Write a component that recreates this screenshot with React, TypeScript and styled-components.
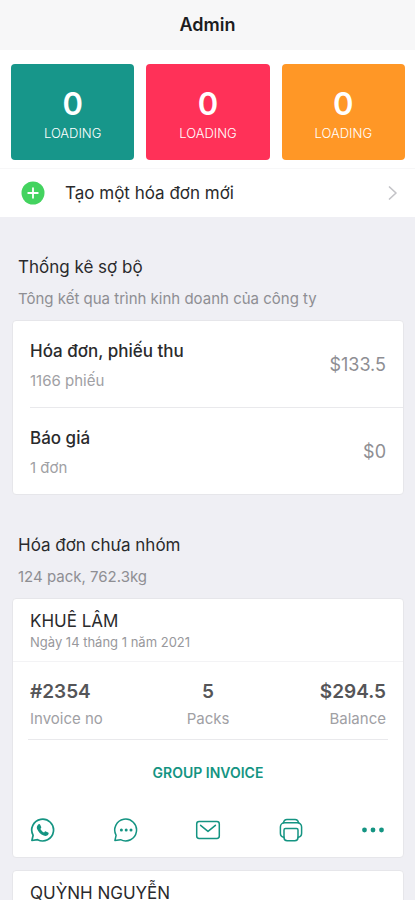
import React from "react";
import styled, { createGlobalStyle } from "styled-components";

const GlobalStyle = createGlobalStyle`
  * { box-sizing: border-box; }
  body {
    margin: 0;
    background: #efeff4;
    font-family: Inter, "Liberation Sans", sans-serif;
    color: #2a2a2c;
  }
  h1, h2, h3, p, ul, dl, dd, dt { margin: 0; padding: 0; font-weight: 400; }
  button { font: inherit; border: 0; background: none; padding: 0; cursor: pointer; }
`;

const Screen = styled.div`
  display: flex;
  flex-direction: column;
  height: 100vh;
`;

const NavBar = styled.header`
  flex: none;
  display: flex;
  align-items: center;
  justify-content: center;
  height: 50px;
  background: #f7f7f8;
`;

const NavTitle = styled.h1`
  font-size: 18px;
  line-height: 24px;
  font-weight: 600;
  color: #1c1c1e;
`;

const Content = styled.main`
  flex: 1;
  min-height: 0;
  overflow-y: auto;
  scrollbar-width: none;
`;

const Tiles = styled.section`
  display: grid;
  grid-template-columns: repeat(3, 1fr);
  gap: 12px;
  padding: 14px 10px 8px 11px;
  background: #fff;
  border-bottom: 1px solid #f7f7f8;
`;

const Tile = styled.div<{ $color: string }>`
  display: flex;
  flex-direction: column;
  align-items: center;
  padding: 22px 0 16px;
  border-radius: 4px;
  background: ${(p) => p.$color};
  color: #fff;
`;

const TileValue = styled.span`
  font-size: 31px;
  line-height: 36px;
  font-weight: 600;
`;

const TileLabel = styled.span`
  font-size: 13px;
  line-height: 22px;
  font-weight: 300;
`;

const CreateRow = styled.button`
  display: flex;
  align-items: center;
  width: 100%;
  height: 48px;
  padding: 0 16px 0 21px;
  background: #fff;
  text-align: left;
`;

const CreateLabel = styled.span`
  flex: 1;
  margin-left: 20px;
  font-size: 17px;
  line-height: 24px;
  color: #2a2a2c;
`;

const Section = styled.section`
  padding: 38px 11px 0 12px;
`;

const SectionTitle = styled.h2`
  padding-left: 6px;
  font-size: 17px;
  line-height: 24px;
`;

const SectionNote = styled.p`
  padding-left: 6px;
  margin: 10px 0 11px;
  font-size: 15px;
  line-height: 20px;
  color: #8e8e93;
`;

const Card = styled.article`
  border: 1px solid #e6e6ea;
  border-radius: 4px;
  background: #fff;
  & + & { margin-top: 12px; }
`;

const StatList = styled.ul`
  padding-left: 17px;
  list-style: none;
`;

const Stat = styled.li`
  display: flex;
  align-items: center;
  justify-content: space-between;
  padding: 18px 17px 16px 0;
  & + & { border-top: 1px solid #e9e9ec; }
`;

const StatName = styled.p`
  font-size: 17px;
  line-height: 24px;
  font-weight: 500;
`;

const StatCount = styled.p`
  margin-top: 8px;
  font-size: 15px;
  line-height: 20px;
  color: #a0a0a4;
`;

const StatAmount = styled.span`
  font-size: 18px;
  line-height: 24px;
  color: #8e8e93;
`;

const CardHead = styled.header`
  padding: 10px 17px 10px;
`;

const Customer = styled.h3`
  font-size: 17px;
  line-height: 24px;
`;

const InvoiceDate = styled.p`
  font-size: 13px;
  line-height: 18px;
  color: #98989c;
`;

const Figures = styled.dl`
  display: grid;
  grid-template-columns: repeat(3, 1fr);
  margin: 0 15px;
  padding: 18px 2px 10px;
  border-bottom: 1px solid #e9e9ec;
`;

const Divider = styled.hr`
  margin: 0;
  border: 0;
  border-top: 1px solid #f3f3f5;
`;

const Figure = styled.div<{ $align: "left" | "center" | "right" }>`
  display: flex;
  flex-direction: column-reverse;
  text-align: ${(p) => p.$align};
`;

const FigureValue = styled.dd`
  margin-bottom: 5px;
  font-size: 19px;
  line-height: 24px;
  font-weight: 600;
  color: #555558;
`;

const FigureLabel = styled.dt`
  font-size: 15px;
  line-height: 20px;
  color: #a0a0a4;
`;

const GroupButton = styled.button`
  display: block;
  width: 100%;
  height: 66px;
  font-size: 14px;
  line-height: 20px;
  font-weight: 600;
  color: #149482;
`;

const Actions = styled.div`
  display: flex;
  align-items: center;
  justify-content: space-between;
  padding: 11px 17px 14px;
`;

const IconButton = styled.button`
  display: flex;
  color: #149482;
`;

const PlusIcon = () => (
  <svg width="24" height="24" viewBox="0 0 24 24" aria-hidden="true">
    <circle cx="12" cy="12" r="11.5" fill="#43d35f" />
    <path d="M12 7.2v9.6M7.2 12h9.6" stroke="#fff" strokeWidth="1.8" strokeLinecap="round" />
  </svg>
);

const ChevronIcon = () => (
  <svg width="12" height="16" viewBox="0 0 12 16" fill="none" aria-hidden="true">
    <path d="M2.5 2 9 8l-6.500 6" stroke="#c4c4c8" strokeWidth="1.7" strokeLinecap="round" strokeLinejoin="round" />
  </svg>
);

const Glyph = ({ children }: { children: React.ReactNode }) => (
  <svg
    width="26"
    height="26"
    viewBox="0 0 26 26"
    fill="none"
    stroke="currentColor"
    strokeWidth="1.5"
    strokeLinecap="round"
    strokeLinejoin="round"
    aria-hidden="true"
  >
    {children}
  </svg>
);

const bubble = "M1.9 23.5 3.1 18.3A10.9 10.9 0 1 1 7.6 22.7Z";

const WhatsAppIcon = () => (
  <Glyph>
    <path d={bubble} strokeWidth="1.7" />
    <path
      d="M8 7.7c.8-.9 1.800-.8 2.200.1l1 2.200c.2.600 0 1-.8 1.900.8 1.600 2 2.800 3.700 3.500.8-.900 1.200-1.300 1.800-1l2.200 1.100c.7.4.7 1 .3 1.800-.9 1.600-2.800 2-4.700 1.300-3.100-1.200-5.400-3.500-6.600-6.500-.6-1.600-.2-3.200.9-4.400Z"
      fill="currentColor"
      stroke="none"
    />
  </Glyph>
);

const ChatIcon = () => (
  <Glyph>
    <path d={bubble} />
    <g fill="currentColor" stroke="none">
      <circle cx="8.4" cy="13" r="1.5" />
      <circle cx="13.2" cy="13" r="1.5" />
      <circle cx="18" cy="13" r="1.5" />
    </g>
  </Glyph>
);

const MailIcon = () => (
  <Glyph>
    <rect x="1.7" y="4.5" width="22.6" height="17" rx="2.4" />
    <path d="m5.6 8.3 7.4 6.1 7.4-6.1" />
  </Glyph>
);

const PrintIcon = () => (
  <Glyph>
    <path d="M6 20.2A4 4 0 0 1 2.4 16.2V10a4.2 4.2 0 0 1 4.2-4.2h12.8A4.2 4.2 0 0 1 23.6 10v6.2a4 4 0 0 1-3.6 4" />
    <path d="M5.5 5.8C5.8 3.7 7 2.4 9 2.4h8c2 0 3.2 1.3 3.5 3.4" />
    <path d="M6 20.5V13a1.500 1.500 0 0 1 1.500-1.500h11A1.500 1.500 0 0 1 20 13v7.5a3.2 3.2 0 0 1-3.2 3.2H9.2A3.2 3.2 0 0 1 6 20.5Z" />
  </Glyph>
);

const MoreIcon = () => (
  <Glyph>
    <g fill="currentColor" stroke="none">
      <circle cx="4.5" cy="13" r="2.4" />
      <circle cx="13" cy="13" r="2.4" />
      <circle cx="21.5" cy="13" r="2.4" />
    </g>
  </Glyph>
);

const tiles = ["#17968a", "#ff3158", "#ff9726"];

const stats = [
  { name: "Hóa đơn, phiếu thu", count: "1166 phiếu", amount: "$133.5" },
  { name: "Báo giá", count: "1 đơn", amount: "$0" },
];

const figures = [
  { label: "Invoice no", value: "#2354", align: "left" },
  { label: "Packs", value: "5", align: "center" },
  { label: "Balance", value: "$294.5", align: "right" },
] as const;

const actions = [
  { label: "WhatsApp", Icon: WhatsAppIcon },
  { label: "Message", Icon: ChatIcon },
  { label: "Email", Icon: MailIcon },
  { label: "Print", Icon: PrintIcon },
  { label: "More", Icon: MoreIcon },
];

export default function App() {
  return (
    <>
      <GlobalStyle />
      <Screen>
        <NavBar>
          <NavTitle>Admin</NavTitle>
        </NavBar>
        <Content>
          <Tiles>
            {tiles.map((color) => (
              <Tile key={color} $color={color}>
                <TileValue>0</TileValue>
                <TileLabel>LOADING</TileLabel>
              </Tile>
            ))}
          </Tiles>
          <CreateRow type="button">
            <PlusIcon />
            <CreateLabel>Tạo một hóa đơn mới</CreateLabel>
            <ChevronIcon />
          </CreateRow>

          <Section>
            <SectionTitle>Thống kê sợ bộ</SectionTitle>
            <SectionNote>Tông kết qua trình kinh doanh của công ty</SectionNote>
            <Card>
              <StatList>
                {stats.map((s) => (
                  <Stat key={s.name}>
                    <div>
                      <StatName>{s.name}</StatName>
                      <StatCount>{s.count}</StatCount>
                    </div>
                    <StatAmount>{s.amount}</StatAmount>
                  </Stat>
                ))}
              </StatList>
            </Card>
          </Section>

          <Section>
            <SectionTitle>Hóa đơn chưa nhóm</SectionTitle>
            <SectionNote>124 pack, 762.3kg</SectionNote>
            <Card>
              <CardHead>
                <Customer>KHUÊ LÂM</Customer>
                <InvoiceDate>Ngày 14 tháng 1 năm 2021</InvoiceDate>
              </CardHead>
              <Divider />
              <Figures>
                {figures.map((f) => (
                  <Figure key={f.label} $align={f.align}>
                    <FigureLabel>{f.label}</FigureLabel>
                    <FigureValue>{f.value}</FigureValue>
                  </Figure>
                ))}
              </Figures>
              <GroupButton type="button">GROUP INVOICE</GroupButton>
              <Actions>
                {actions.map(({ label, Icon }) => (
                  <IconButton key={label} type="button" aria-label={label}>
                    <Icon />
                  </IconButton>
                ))}
              </Actions>
            </Card>
            <Card>
              <CardHead>
                <Customer>QUỲNH NGUYỄN</Customer>
              </CardHead>
            </Card>
          </Section>
        </Content>
      </Screen>
    </>
  );
}
